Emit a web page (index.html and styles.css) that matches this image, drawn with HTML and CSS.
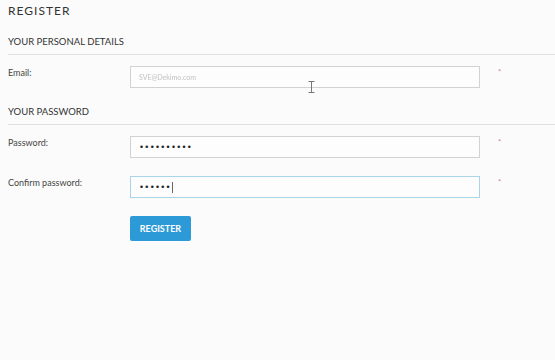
FILE: index.html
```html
<!DOCTYPE html>
<html>
<head>
<meta charset="utf-8">
<link rel="stylesheet" href="styles.css">
</head>
<body>
<div class="page">
  <h1 class="title">REGISTER</h1>
  <h2 class="section">YOUR PERSONAL DETAILS</h2>
  <div class="row row-email">
    <label class="label">Email:</label>
    <div class="field"><span class="placeholder">SVE@Dekimo.com</span></div>
    <span class="req">*</span>
  </div>
  <h2 class="section section-pw">YOUR PASSWORD</h2>
  <div class="row row-pw">
    <label class="label">Password:</label>
    <div class="field"><span class="dots">&#8226;&#8226;&#8226;&#8226;&#8226;&#8226;&#8226;&#8226;&#8226;&#8226;</span></div>
    <span class="req">*</span>
  </div>
  <div class="row row-confirm">
    <label class="label">Confirm password:</label>
    <div class="field focus"><span class="dots">&#8226;&#8226;&#8226;&#8226;&#8226;&#8226;</span><span class="caret"></span></div>
    <span class="req">*</span>
  </div>
  <div class="actions">
    <button class="btn">REGISTER</button>
  </div>
  <svg class="ibeam" width="7" height="12" viewBox="0 0 7 12"><path d="M0.5 0.5h6M3.5 0.5v11M0.5 11.5h6" stroke="#777" stroke-width="1" fill="none"/></svg>
</div>
</body>
</html>
```
FILE: styles.css
```css
html, body {
  margin: 0;
  padding: 0;
  background: #fbfbfb;
}
body {
  font-family: Lato, "Open Sans", sans-serif;
  color: #333;
}
.page {
  position: relative;
  width: 555px;
  height: 360px;
  padding-top: 4px;
  box-sizing: border-box;
}
.title {
  margin: 0 0 0 8px;
  font-size: 12px;
  font-weight: 400;
  letter-spacing: 1px;
  line-height: 14px;
  color: #333;
}
.section {
  margin: 18px 0 0 8px;
  padding-bottom: 6px;
  font-size: 9.5px;
  font-weight: 400;
  line-height: 12px;
  color: #333;
  border-bottom: 1px solid #e0e0e0;
}
.section-pw {
  margin-top: 18px;
}
.row {
  display: flex;
  align-items: flex-start;
  margin-left: 8px;
}
.row-email { margin-top: 11px; }
.row-pw { margin-top: 11px; }
.row-confirm { margin-top: 18px; }
.label {
  width: 122px;
  font-size: 9px;
  line-height: 12px;
  padding-top: 1px;
  color: #444;
}
.field {
  width: 350px;
  height: 22px;
  box-sizing: border-box;
  border: 1px solid #d2d2d2;
  background: #fdfdfd;
  display: flex;
  align-items: center;
  padding-left: 8px;
}
.field.focus {
  border-color: #a9d4ea;
}
.placeholder {
  font-size: 7px;
  color: #c2c2c2;
  filter: blur(0.6px);
}
.dots {
  font-family: "DejaVu Sans", sans-serif;
  font-size: 8.5px;
  letter-spacing: 0.3px;
  color: #222;
}
.caret {
  display: inline-block;
  width: 1px;
  height: 11px;
  background: #666;
  margin-left: 1px;
}
.req {
  margin-left: 18px;
  margin-top: 2px;
  font-size: 8px;
  line-height: 8px;
  color: #e07f7f;
}
.actions {
  margin: 18px 0 0 130px;
}
.btn {
  width: 61px;
  height: 25px;
  border: none;
  border-radius: 2px;
  background: #2b9ad7;
  color: #fff;
  font-family: Lato, sans-serif;
  font-weight: 700;
  font-size: 9px;
  padding: 0;
}
.ibeam {
  position: absolute;
  left: 308px;
  top: 81px;
}
```
